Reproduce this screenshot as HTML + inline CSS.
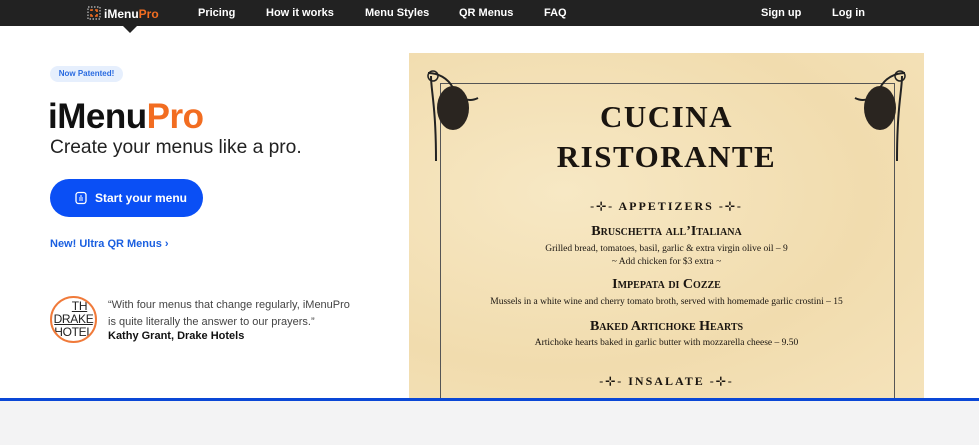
<!DOCTYPE html>
<html><head><meta charset="utf-8"><style>
*{margin:0;padding:0;box-sizing:border-box}
body{width:979px;height:445px;overflow:hidden;background:#fff;font-family:"Liberation Sans",Arial,sans-serif;position:relative}
.nav{position:absolute;left:0;top:0;width:979px;height:26px;background:#222}
.nav span{position:absolute;top:7px;color:#fff;font-size:11px;font-weight:bold}
.caret{position:absolute;left:123px;top:26px;width:0;height:0;border-left:7px solid transparent;border-right:7px solid transparent;border-top:7px solid #222}
.abs{position:absolute}
.menu{position:absolute;left:409px;top:53px;width:515px;height:347px;background:radial-gradient(ellipse at 30% 40%,#f7e8c4,#f1dcae 60%,#f5e3bb);font-family:"Liberation Serif",serif;color:#1a1510;text-align:center}
.menu .c{position:absolute;left:0;width:515px}
.frame{position:absolute;left:31px;top:30px;width:455px;height:330px;border:1px solid #555;border-bottom:none}
.sc{font-variant:small-caps;font-weight:bold}
</style></head><body>
<div class="nav">
<svg class="abs" style="left:87px;top:6px" width="14" height="14" viewBox="0 0 14 14"><rect x="1" y="1" width="12" height="12" fill="none" stroke="#aaa" stroke-width="1.4" stroke-dasharray="1.5 1.5"/><path d="M4 5V4h2M8 4h2v2M10 8v2H8M6 10H4V8" fill="none" stroke="#f26d21" stroke-width="1.6"/></svg>
<span style="left:104px;font-size:12px">iMenu<b style="color:#f26d21">Pro</b></span>
<span style="left:198px">Pricing</span>
<span style="left:266px">How it works</span>
<span style="left:365px">Menu Styles</span>
<span style="left:459px">QR Menus</span>
<span style="left:544px">FAQ</span>
<span style="left:761px">Sign up</span>
<span style="left:832px">Log in</span>
</div>
<div class="caret"></div>
<div class="abs" style="left:50px;top:66px;width:73px;height:16px;border-radius:8px;background:#e6effd;color:#2a6be0;font-size:8px;font-weight:bold;line-height:16px;text-align:center">Now Patented!</div>
<div class="abs" style="left:48px;top:97px;font-size:35px;font-weight:bold;letter-spacing:-0.5px;color:#111">iMenu<span style="color:#f26d21">Pro</span></div>
<div class="abs" style="left:50px;top:137px;font-size:19.2px;color:#222">Create your menus like a pro.</div>
<div class="abs" style="left:50px;top:179px;width:153px;height:38px;border-radius:19px;background:#0a4ff5;color:#fff;font-size:12px;font-weight:bold;line-height:38px;padding-left:45px">Start your menu</div>
<svg class="abs" style="left:74px;top:191px" width="14" height="14" viewBox="0 0 14 14"><rect x="2" y="1.5" width="10" height="11" rx="2.5" fill="none" stroke="#fff" stroke-width="1.3"/><path d="M5 7h4M5 9h4M6 5h2" stroke="#fff" stroke-width="1.1"/></svg>
<div class="abs" style="left:50px;top:238px;font-size:11px;font-weight:bold;color:#1a5fe0">New! Ultra QR Menus ›</div>
<div class="abs" style="left:50px;top:296px;width:47px;height:47px;border-radius:50%;border:2px solid #f07a3a;overflow:hidden;background:#fff;font-size:12px;line-height:13px;color:#222;font-family:'Liberation Sans',sans-serif;text-align:center;letter-spacing:-0.3px;padding-top:2px">
<div style="margin-left:12px;text-decoration:underline">TH</div><div>DRAKE</div><div style="text-decoration:overline">HOTEL</div></div>
<div class="abs" style="left:108px;top:297px;font-size:11px;line-height:17px;color:#444">“With four menus that change regularly, iMenuPro<br>is quite literally the answer to our prayers.”</div>
<div class="abs" style="left:108px;top:330px;font-size:11px;font-weight:bold;color:#111">Kathy Grant, Drake Hotels</div>
<div class="menu">
<div class="frame"></div>
<svg class="abs" style="left:14px;top:15px" width="70" height="95" viewBox="0 0 70 95"><path d="M5 5c10 0 20 5 25 15s15 15 25 10M8 8c0 15 5 30 5 85" fill="none" stroke="#222" stroke-width="2"/><ellipse cx="30" cy="40" rx="16" ry="22" fill="#2a2520"/><circle cx="10" cy="8" r="5" fill="none" stroke="#222" stroke-width="1.5"/></svg>
<svg class="abs" style="left:431px;top:15px;transform:scaleX(-1)" width="70" height="95" viewBox="0 0 70 95"><path d="M5 5c10 0 20 5 25 15s15 15 25 10M8 8c0 15 5 30 5 85" fill="none" stroke="#222" stroke-width="2"/><ellipse cx="30" cy="40" rx="16" ry="22" fill="#2a2520"/><circle cx="10" cy="8" r="5" fill="none" stroke="#222" stroke-width="1.5"/></svg>
<div class="c" style="top:44px;font-size:31px;font-weight:bold;letter-spacing:1.5px;line-height:40px">CUCINA<br>RISTORANTE</div>
<div class="c" style="top:146px;font-size:12px;font-weight:bold;letter-spacing:2px">-⊹- APPETIZERS -⊹-</div>
<div class="c sc" style="top:171px;font-size:14px">Bruschetta all’Italiana</div>
<div class="c" style="top:190px;font-size:9.5px;line-height:13px">Grilled bread, tomatoes, basil, garlic &amp; extra virgin olive oil – 9<br>~ Add chicken for $3 extra ~</div>
<div class="c sc" style="top:224px;font-size:14px">Impepata di Cozze</div>
<div class="c" style="top:244px;font-size:9.5px">Mussels in a white wine and cherry tomato broth, served with homemade garlic crostini – 15</div>
<div class="c sc" style="top:266px;font-size:14px">Baked Artichoke Hearts</div>
<div class="c" style="top:285px;font-size:9.5px">Artichoke hearts baked in garlic butter with mozzarella cheese – 9.50</div>
<div class="c" style="top:321px;font-size:12px;font-weight:bold;letter-spacing:2px">-⊹- INSALATE -⊹-</div>
</div>
<div class="abs" style="left:0;top:398px;width:979px;height:3px;background:#0a47d6"></div>
<div class="abs" style="left:0;top:401px;width:979px;height:44px;background:#f3f3f4"></div>
</body></html>
